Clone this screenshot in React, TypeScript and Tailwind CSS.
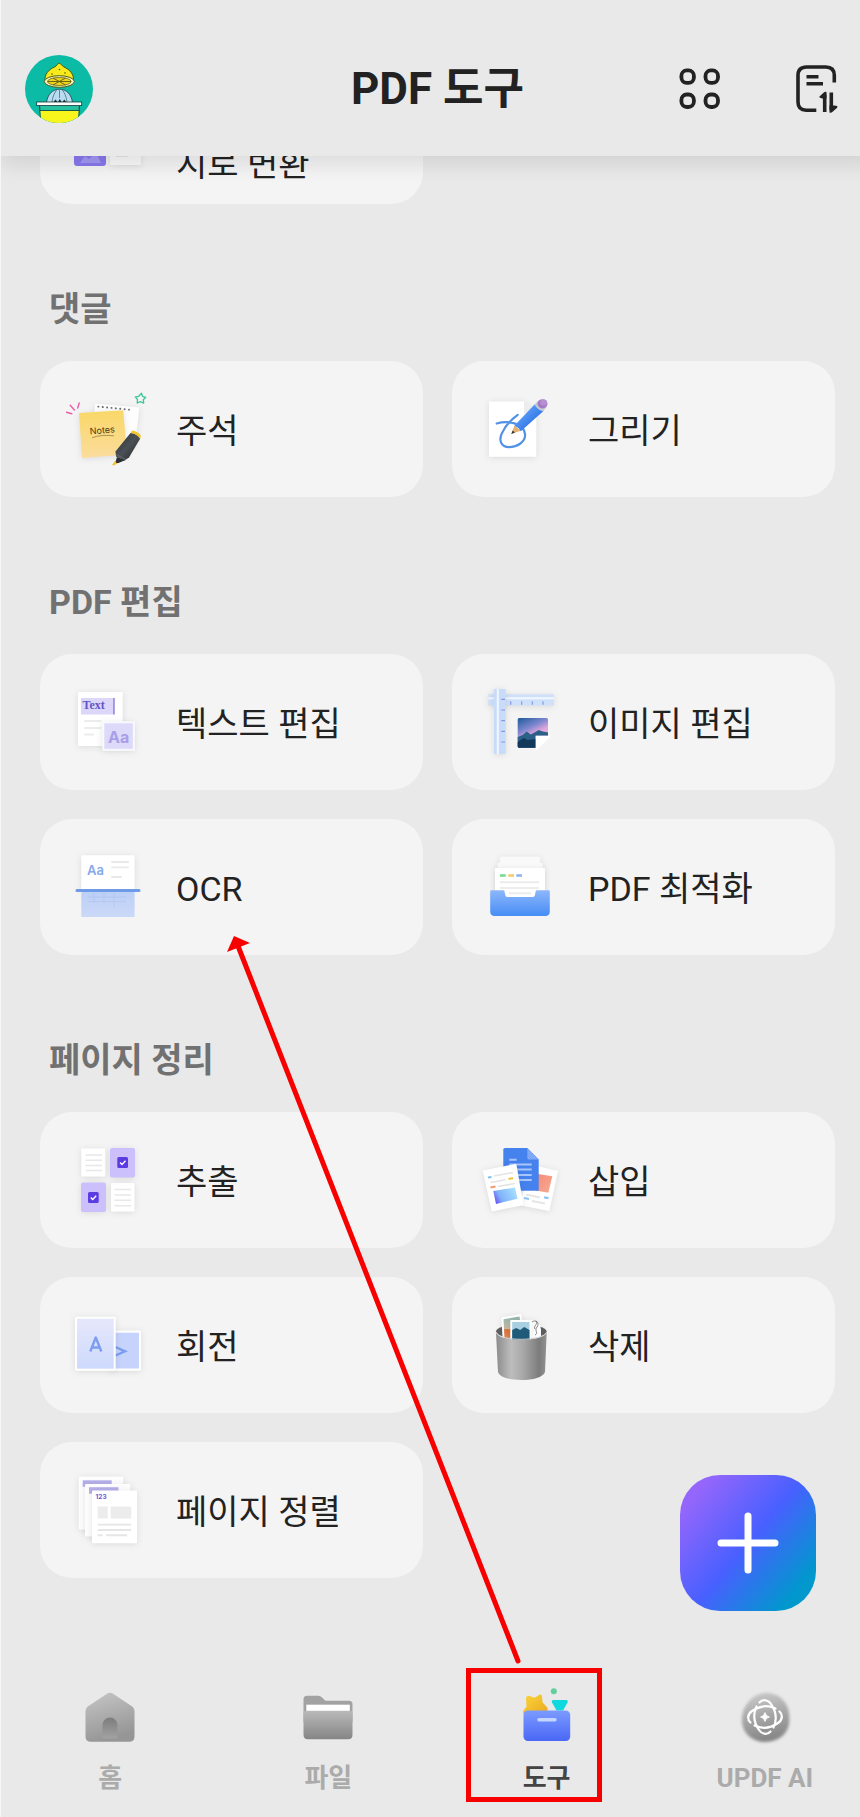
import type { ReactNode } from "react";

const SANS = "font-['Roboto','Noto_Sans_CJK_KR',sans-serif]";

function Art({ children }: { children: ReactNode }) {
  return (
    <svg viewBox="0 0 96 96" className="size-24 shrink-0 overflow-visible" aria-hidden="true">
      {children}
    </svg>
  );
}

const soft = "drop-shadow-[0_1px_3px_rgba(0,0,0,0.10)]";

function ConvertArt() {
  return (
    <Art>
      <rect x="14" y="40" width="32" height="38" rx="3" fill="#8878ee" />
      <path d="M20 75l5-7 4 3 7-6 5 10z" fill="#a397f4" />
      <g className={soft}>
        <rect x="50" y="40" width="31" height="37" rx="1" fill="#f9f9f9" />
      </g>
      <path d="M56 68h12" stroke="#e4e4e4" strokeWidth="2" />
    </Art>
  );
}

function NotesArt() {
  return (
    <Art>
      <defs>
        <linearGradient id="sticky" x1="0" y1="0" x2="0" y2="1">
          <stop offset="0" stopColor="#f9d868" />
          <stop offset="1" stopColor="#fbdc9c" />
        </linearGradient>
        <linearGradient id="marker" x1="0" y1="0" x2="1" y2="1">
          <stop offset="0" stopColor="#2b2f33" />
          <stop offset="0.5" stopColor="#4a5055" />
          <stop offset="1" stopColor="#202326" />
        </linearGradient>
      </defs>
      <path d="M6.5 31.3l5.3 1.4M10.2 24.2l4.2 4.8M19.2 22l-1.5 5" stroke="#e85fa8" strokeWidth="1.4" strokeLinecap="round" fill="none" />
      <path d="M81.500 12.200l1 3.200 3.200.9-2.400 2.400.4 3.400-3.300-1.400-3.200 1.300.3-3.500-2.200-2.600 3.400-.6z" stroke="#3cc79b" strokeWidth="1.3" fill="none" strokeLinejoin="round" />
      <g className={soft}>
        <path d="M35 22.5l44.3 4L75 66l-43-4z" fill="#fdfdfd" />
      </g>
      <path d="M38.3 25.6l32.5 3.2" stroke="#6a6d71" strokeWidth="1.900" strokeDasharray="0.1 4.3" strokeLinecap="round" />
      <g className={soft}>
        <path d="M19 32l44.3-2.7L67 73.5 22 77z" fill="url(#sticky)" />
      </g>
      <text x="30" y="53.5" fontSize="9" fill="#4d3b12" transform="rotate(-5 30 53)" className="font-['Inter',sans-serif]">Notes</text>
      <path d="M32 56.8c6-2.6 14-2.8 22-2" stroke="#8a733a" strokeWidth="0.7" fill="none" />
      <path d="M57 76l-2 6.5 3.5-.4 7-3z" fill="#2b2f33" />
      <path d="M54.8 80l-2.2 3.3.4 1.4 4.2-2z" fill="#f3c33a" />
      <path d="M70.5 52c4 .2 8 2.4 9.6 5.8L69 76.500l-4.500 3L56 75.500l-.5-5z" fill="url(#marker)" />
      <path d="M70.500 52l1.700-2.600c4.300.6 7.400 2.600 8.800 5.600l-.9 2.800c-2-3.200-5.600-5.400-9.600-5.800z" fill="#f1c62d" />
      <path d="M56 73.500l10 5" stroke="#7c8287" strokeWidth="0.6" />
    </Art>
  );
}

function DrawArt() {
  return (
    <Art>
      <defs>
        <linearGradient id="pencil" x1="0" y1="0" x2="1" y2="1">
          <stop offset="0.3" stopColor="#5a9cf8" />
          <stop offset="0.7" stopColor="#2f74e4" />
        </linearGradient>
      </defs>
      <g className={soft}>
        <path d="M17 20.500h35l12.300 12v43.200H17z" fill="#fff" />
      </g>
      <path d="M52 20.500v12h12.300z" fill="#ececec" />
      <path d="M24.700 42.500c11-3.200 27-.5 28.300 10.500 1 8-8 13-16 13.100-8 0-10.500-7-7-14 3.500-7.500 9-13.500 15.700-18.300" stroke="#5292e6" strokeWidth="2.200" fill="none" strokeLinecap="round" />
      <path d="M39.300 53l3.200-8.500 6.200 5.300z" fill="#e6b071" />
      <path d="M39.300 53l1.300-3.500 2.300 2z" fill="#333" />
      <path d="M42.400 44.800L62.500 23.500l9 6.500L48.800 50.300l-2.400-3.400z" fill="url(#pencil)" />
      <path d="M62.500 23.500l3.700-3.700c3.500.6 6.500 2.900 8.500 6.200l-3.600 4.300c-3.500-.8-6.700-3.300-8.600-6.800z" fill="#c3c8d4" />
      <ellipse cx="70.500" cy="22.800" rx="5" ry="4.600" fill="#a67bc6" />
      <ellipse cx="71.700" cy="21.500" rx="3.400" ry="3" fill="#b590d2" />
    </Art>
  );
}

function TextArt() {
  return (
    <Art>
      <g className={soft}>
        <rect x="18" y="18" width="44.700" height="54" rx="1" fill="#fff" />
      </g>
      <rect x="21" y="24" width="33" height="16.500" fill="#dcd7f8" />
      <text x="22.500" y="35" fontSize="12" fontWeight="600" fill="#6353c8" className="font-['Liberation_Serif',serif]">Text</text>
      <path d="M54 24v16.500" stroke="#8172d8" strokeWidth="1.300" />
      <path d="M24.300 47h17M24.300 54h17M24.300 60.500h9.500" stroke="#ececec" strokeWidth="2" />
      <g className={soft}>
        <rect x="42.300" y="47.300" width="32.500" height="29.500" fill="#f8f8ff" />
      </g>
      <rect x="44.300" y="49.300" width="28.500" height="25.500" fill="#dcdaf8" />
      <text x="48" y="68.500" fontSize="16" fontWeight="700" fill="#a99fe8" className="font-['Inter',sans-serif]">Aa</text>
    </Art>
  );
}

function OcrArt() {
  return (
    <Art>
      <defs>
        <linearGradient id="scan" x1="0" y1="0" x2="0" y2="1">
          <stop offset="0" stopColor="#bccff5" />
          <stop offset="1" stopColor="#cbd9f8" />
        </linearGradient>
      </defs>
      <g className={soft}>
        <rect x="21.300" y="16.300" width="53.300" height="35" rx="1" fill="#fff" />
      </g>
      <text x="27" y="35.500" fontSize="13" fontWeight="600" fill="#83aaec" className="font-['Inter',sans-serif]">Aa</text>
      <path d="M51.300 23h17.500M51.300 28.300h17.500M51.300 38h10.500" stroke="#e9e9e9" strokeWidth="1.800" />
      <rect x="21.300" y="53" width="53.300" height="25" rx="1" fill="url(#scan)" />
      <path d="M28 58h38M28 62.500h38M34 54v10M44 54v10M54 54v14" stroke="#b0c4f0" strokeWidth="0.700" />
      <path d="M17 51.500h62" stroke="#6f9ae8" strokeWidth="3" strokeLinecap="round" />
    </Art>
  );
}

function ImageArt() {
  return (
    <Art>
      <defs>
        <linearGradient id="sky" x1="0" y1="0" x2="0.500" y2="1">
          <stop offset="0" stopColor="#1b5a9a" />
          <stop offset="0.400" stopColor="#7d86cf" />
          <stop offset="0.650" stopColor="#e3a7dc" />
        </linearGradient>
      </defs>
      <g className={soft}>
        <rect x="16.300" y="20.300" width="65.700" height="11.200" fill="#cfe0fa" />
      </g>
      <path d="M16.300 24.300H82" stroke="#f2f7ff" strokeWidth="2" />
      <path d="M38.700 27.300v3.500M49.700 27.300v3.500M60.300 27.300v3.500M71 27.300v3.500" stroke="#7f97dc" strokeWidth="1.100" />
      <g className={soft}>
        <rect x="22" y="15" width="11.700" height="65" fill="#c8dcfa" />
      </g>
      <path d="M25.800 15v65" stroke="#f2f7ff" strokeWidth="2" />
      <path d="M29.300 25.300h3.700M29.300 36h3.700M29.300 46.700h3.700M29.300 57.300h3.700M29.300 68h3.700" stroke="#8a93de" strokeWidth="1.200" />
      <path d="M47.200 44h27.300q1.500 0 1.500 1.500v16.200H63.700v12H47.200q-1.500 0-1.500-1.500V45.500q0-1.500 1.500-1.500z" fill="url(#sky)" />
      <path d="M45.700 63l5-2 4-3.500 4 3 3-1.500 5-3 4 1.500 5.300 1v3.200H63.700v12H47.200q-1.500 0-1.500-1.500z" fill="#2b6088" />
      <path d="M45.700 68l6-4 4 2 8-1v8.700H47.200q-1.500 0-1.500-1.500z" fill="#12395a" />
      <path d="M63.700 61.700h15.500L65 76q-1.300 0-1.300-1.600z" fill="#fff" />
    </Art>
  );
}

function OptimizeArt() {
  return (
    <Art>
      <defs>
        <linearGradient id="tray" x1="0" y1="0" x2="0" y2="1">
          <stop offset="0" stopColor="#8db7fb" />
          <stop offset="1" stopColor="#468df5" />
        </linearGradient>
      </defs>
      <g className={soft}>
        <rect x="28" y="17.700" width="40" height="30" rx="1.500" fill="#f9f9f9" />
        <rect x="25.500" y="23.500" width="45.200" height="30" rx="1.500" fill="#fafafa" />
      </g>
      <g className={soft}>
        <rect x="23" y="29" width="50" height="30" rx="1" fill="#fff" />
      </g>
      <path d="M28 36.500h5.700" stroke="#74dc92" strokeWidth="2.600" />
      <path d="M36.300 36.500H42" stroke="#f0cd66" strokeWidth="2.600" />
      <path d="M44.300 36.500H50" stroke="#8db4ee" strokeWidth="2.600" />
      <path d="M28 43.300h39M28 49h39M37 54.200h22" stroke="#ececec" strokeWidth="2" />
      <path d="M19.500 51.300h11.800q1 0 1.200 1l.8 4q.3 1.700 2 1.700h25.600q1.700 0 2-1.700l.8-4q.2-1 1.200-1h11.600q1.300 0 1.300 1.300v20q0 4.400-4.400 4.400H22.600q-4.400 0-4.400-4.400v-20q0-1.300 1.300-1.300z" fill="url(#tray)" />
    </Art>
  );
}

function ExtractArt() {
  return (
    <Art>
      <g className={soft}>
        <rect x="21.300" y="16.500" width="24" height="28" rx="1" fill="#fff" />
        <rect x="51" y="51" width="23.500" height="28.500" rx="1" fill="#fff" />
      </g>
      <path d="M25.500 23h16.500M25.500 28.200h16.500M25.500 33.400h16.500M25.500 38.600h16.500M54.500 57.500h16.500M54.500 62.900h16.500M54.500 68.300h16.500M54.500 73.700h16.500" stroke="#e8e8e8" strokeWidth="1.500" />
      <g className={soft}>
        <rect x="50" y="16" width="25" height="29.500" rx="2" fill="#cbc0fb" />
        <rect x="21" y="50.500" width="25" height="29.500" rx="2" fill="#cbc0fb" />
      </g>
      <rect x="57.300" y="25" width="10.700" height="11" rx="1.500" fill="#5a3ce0" />
      <rect x="28" y="60" width="10.700" height="11" rx="1.500" fill="#5a3ce0" />
      <path d="M60 30.500l2 2 3.500-3.800M30.700 65.500l2 2 3.500-3.800" stroke="#fff" strokeWidth="1.300" fill="none" />
    </Art>
  );
}

function InsertArt() {
  return (
    <Art>
      <defs>
        <linearGradient id="blob" x1="0" y1="0.700" x2="1" y2="0.300">
          <stop offset="0" stopColor="#6a4ff0" />
          <stop offset="0.300" stopColor="#7fb2fa" />
          <stop offset="1" stopColor="#a9e0ff" />
        </linearGradient>
        <linearGradient id="coral" x1="0" y1="0" x2="1" y2="1">
          <stop offset="0" stopColor="#f58a78" />
          <stop offset="1" stopColor="#f7ab92" />
        </linearGradient>
      </defs>
      <g className={soft}>
        <path d="M60 33l26 6-8.700 40L47 73z" fill="#fff" />
      </g>
      <path d="M66 42l14.300 2.300-4 16.500L64 58.500z" fill="url(#coral)" />
      <path d="M54 62.500l14 3M60 69l13 2.500" stroke="#e6e6e6" strokeWidth="2" />
      <path d="M72 65.300l4.500.8M52 66l5 1" stroke="#8cc6f5" strokeWidth="2.200" />
      <path d="M33 16h22.300l11.400 11.500V58.700H31.300V17.500Q31.300 16 33 16z" fill="#4582ee" />
      <path d="M55.300 16l11.400 11.500H57q-1.700 0-1.700-1.500z" fill="#7fa9f6" />
      <path d="M37.300 27.700h7.400M37.300 32.500h22.400M37.300 37.500h22.400M37.300 43h22.400M37.300 48h22.400" stroke="#a8c6fb" strokeWidth="2" />
      <g className={soft}>
        <path d="M12 38.300l31.300-6.200q1-.2 1.200.8L51.300 72q.2 1-.8 1.200L21 79.200q-1.200.2-1.500-.9L11 39.700q-.2-1.200 1-1.400z" fill="#fff" />
      </g>
      <path d="M22 44l19-3.500M18.500 50.500l15-2.800M26 54.500l17-3" stroke="#e4e4e4" strokeWidth="1.600" />
      <path d="M16 45.500l3.500-.6" stroke="#7cc4ee" strokeWidth="2" />
      <path d="M36.500 47l4.500-.9" stroke="#f3c33a" strokeWidth="2.200" />
      <path d="M18.500 55.500l5-1" stroke="#f09a72" strokeWidth="2" />
      <path d="M21.300 59l21.700-3.500 2.500 11.300L24 72z" fill="url(#blob)" />
    </Art>
  );
}

function RotateArt() {
  return (
    <Art>
      <defs>
        <linearGradient id="leaf" x1="0" y1="0" x2="0" y2="1">
          <stop offset="0" stopColor="#e6e7fb" />
          <stop offset="1" stopColor="#cddafc" />
        </linearGradient>
      </defs>
      <g className={soft}>
        <rect x="50" y="33.500" width="31" height="40.200" rx="1.500" fill="#fff" />
      </g>
      <rect x="52" y="35.700" width="27" height="35.800" fill="#c6d3fc" />
      <path d="M55.500 50l9.500 4.300-9.500 4.200" stroke="#7c9df0" strokeWidth="2.400" fill="none" />
      <g className={soft}>
        <rect x="15" y="19.700" width="40.700" height="54" rx="1.500" fill="#fff" />
      </g>
      <rect x="17" y="21.700" width="36.700" height="50" fill="url(#leaf)" />
      <path d="M30.300 54.500l5.500-14 5.500 14M32.300 50.500h7" stroke="#7c9df0" strokeWidth="2.400" fill="none" strokeLinejoin="round" />
    </Art>
  );
}

function DeleteArt() {
  return (
    <Art>
      <defs>
        <linearGradient id="bin" x1="0" y1="0" x2="1" y2="0">
          <stop offset="0" stopColor="#8b8b8b" />
          <stop offset="0.300" stopColor="#bdbdbd" />
          <stop offset="0.550" stopColor="#a6a6a6" />
          <stop offset="0.850" stopColor="#7c7c7c" />
          <stop offset="1" stopColor="#929292" />
        </linearGradient>
        <linearGradient id="photo" x1="0" y1="0" x2="0" y2="1">
          <stop offset="0" stopColor="#8fb7b1" />
          <stop offset="0.550" stopColor="#c6b9a2" />
          <stop offset="0.600" stopColor="#d8733b" />
          <stop offset="1" stopColor="#e0874e" />
        </linearGradient>
      </defs>
      <ellipse cx="49.300" cy="34.500" rx="25.300" ry="7" fill="#606060" />
      <g className={soft}>
        <path d="M29.500 20.500L49 17l5 24H30.500z" fill="#fff" />
        <path d="M31.500 22.300l16-2.800 4 22H32.500z" fill="url(#photo)" />
        <path d="M58 22.500q10 1 11 10V41H58z" fill="#fff" />
      </g>
      <path d="M60 25c4-3 8 1 5 5s2 6-2 8M64 24c2 4-3 5-1 8" stroke="#555" strokeWidth="0.700" fill="none" />
      <g className={soft}>
        <rect x="38.300" y="23" width="21" height="20" rx="1" fill="#fff" />
      </g>
      <rect x="40.200" y="25" width="17.300" height="18" fill="#a9cfe2" />
      <path d="M40.200 33l4-2 4 2 4-3 5.300 3v10H40.200z" fill="#1f5a78" />
      <path d="M24 35.500c2 5 13 7.300 25.300 7.300s23.300-2.300 25.400-7.300L73 75c-2 5.500-12 8-23.500 8S28 80.500 26 75z" fill="url(#bin)" />
      <path d="M24 35c2 5 13 7.300 25.300 7.300S72.600 40 74.700 35" stroke="#d0d0d0" strokeWidth="1" fill="none" />
    </Art>
  );
}

function SortArt() {
  return (
    <Art>
      <g className={soft}>
        <rect x="18.700" y="14.500" width="44.600" height="53" rx="1" fill="#fdfdfd" />
      </g>
      <rect x="22.700" y="18.300" width="29" height="6.500" fill="#b6b0ea" />
      <g className={soft}>
        <rect x="25" y="21.900" width="45.300" height="52.500" rx="1" fill="#fdfdfd" />
      </g>
      <rect x="29" y="25.200" width="29.500" height="6.500" fill="#b6b0ea" />
      <g className={soft}>
        <rect x="32" y="28.500" width="45" height="52.800" rx="1" fill="#fff" />
      </g>
      <text x="35.500" y="37" fontSize="6.500" fontWeight="700" fill="#6c55d4" className="font-['Inter',sans-serif]">123</text>
      <rect x="37.700" y="44.500" width="10" height="12" fill="#ececec" />
      <rect x="50.700" y="44.500" width="20.500" height="12" fill="#ececec" />
      <path d="M37.700 62.600h33.500M37.700 68h33.500M37.700 73.300h5M46 73.300h21" stroke="#e6e6e6" strokeWidth="1.900" />
    </Art>
  );
}

function Avatar() {
  return (
    <svg viewBox="0 0 68 68" className="size-[68px]" aria-hidden="true">
      <defs>
        <clipPath id="round">
          <circle cx="34" cy="34" r="34" />
        </clipPath>
      </defs>
      <g clipPath="url(#round)">
        <rect width="68" height="68" fill="#0bbba5" />
        <path d="M34.300 8.300c1.800 0 2.400 2.600 4.500 3.600C45 14.500 49 19.500 48.500 25.500H20c-.5-6 3.500-11 9.700-13.600 2.300-1 2.800-3.600 4.600-3.600z" fill="#f9ea1c" stroke="#4e5a12" strokeWidth="1" />
        <circle cx="27" cy="19" r=".8" fill="#4e5a12" />
        <circle cx="34.500" cy="14.500" r=".8" fill="#4e5a12" />
        <circle cx="40" cy="18" r=".8" fill="#4e5a12" />
        <ellipse cx="34.300" cy="26.500" rx="15" ry="5.800" fill="#fbf6c0" stroke="#4e5a12" strokeWidth="1" />
        <ellipse cx="34.300" cy="26.500" rx="11.800" ry="4" fill="#efd51d" stroke="#6b6414" strokeWidth=".8" />
        <path d="M22.500 26.500h23.600M28 23l12.600 7M40.600 23L28 30" stroke="#5d5812" strokeWidth=".9" />
        <path d="M21.500 47.500c1-8 6-13.300 13-13.300s12 5.300 13 13.300z" fill="#b9dcf0" stroke="#28505c" strokeWidth=".9" />
        <path d="M27 47c.5-5 2.500-9.500 5-12.500M42 47c-.5-5-2.500-9.500-5-12.500M34.500 35v8" stroke="#4d7f92" strokeWidth=".9" fill="none" />
        <path d="M28.500 47l2-2.500 2 2.500zM33 47l1.800-3 1.800 3zM37.500 47l1.800-2.500 1.800 2.500z" fill="#1c2c30" />
        <path d="M14.500 50h40l-1.300 20H16z" fill="#27c0a0" stroke="#123c38" strokeWidth="1" />
        <path d="M15.500 56h38l-.8 14H16.300z" fill="#f7f51c" />
        <path d="M15 55.500h39" stroke="#123c38" strokeWidth=".8" />
        <rect x="11.700" y="47" width="45" height="3.600" fill="#fff" stroke="#123c38" strokeWidth=".8" />
      </g>
    </svg>
  );
}

function GridIcon() {
  return (
    <svg viewBox="0 0 42 42" className="size-[42px]" fill="none" stroke="#222" strokeWidth="3.800" aria-hidden="true">
      <rect x="2.400" y="2.400" width="12.500" height="12.500" rx="5.400" />
      <rect x="26.500" y="2.400" width="12.500" height="12.500" rx="5.400" />
      <rect x="2.400" y="26.500" width="12.500" height="12.500" rx="5.400" />
      <rect x="26.500" y="26.500" width="12.500" height="12.500" rx="5.400" />
    </svg>
  );
}

function SortPageIcon() {
  return (
    <svg viewBox="0 0 42 48" className="h-12 w-[42px]" fill="none" stroke="#222" strokeWidth="3.600" aria-hidden="true">
      <path d="M20.300 45.300h-10Q2 45 2 37V10.500Q2 2 10.500 2h19.300Q38.300 2 38.300 10.500v7" />
      <path d="M10.500 11.700h12M10.500 18.800H27" />
      <path d="M28.700 47V29.500M35.300 27.500V45" strokeWidth="3.600" />
      <path d="M30.500 27v6.500h-4.300l-2.700-1q-.4-.8.500-1.600l3.800-3.400q1.400-1 2.700-.5zM33.500 47.500v-7h5l2.600.5q.8.900-.2 1.900l-4.300 3.900q-1.600 1.300-3.100.7z" fill="#222" stroke="none" />
    </svg>
  );
}

function HomeIcon() {
  return (
    <svg viewBox="0 0 60 60" className="size-[60px]" aria-hidden="true">
      <defs>
        <linearGradient id="house" x1="0" y1="0" x2="0.300" y2="1">
          <stop offset="0" stopColor="#c6c6c6" />
          <stop offset="1" stopColor="#969696" />
        </linearGradient>
        <linearGradient id="door" x1="0" y1="0" x2="0" y2="1">
          <stop offset="0" stopColor="#7c7c7c" />
          <stop offset="1" stopColor="#a2a2a2" />
        </linearGradient>
      </defs>
      <path d="M27 6.700q3-1.800 6 0L51.500 19q3 2 3 5.500v24.700q0 5.500-5.500 5.500H11q-5.500 0-5.500-5.500V24.500q0-3.500 3-5.500z" fill="url(#house)" />
      <path d="M22.500 51.500V38a7.500 7.500 0 0 1 15 0v13.500z" fill="url(#door)" />
    </svg>
  );
}

function FolderIcon() {
  return (
    <svg viewBox="0 0 60 60" className="size-[60px]" aria-hidden="true">
      <defs>
        <linearGradient id="folder" x1="0" y1="0" x2="0" y2="1">
          <stop offset="0" stopColor="#bababa" />
          <stop offset="1" stopColor="#858585" />
        </linearGradient>
      </defs>
      <path d="M9 8.700h11.500q2 0 3.300 1.500l3.500 3.500H51q3.500 0 3.500 3.500V35h-49V12.200Q5.500 8.700 9 8.700z" fill="#a2a2a2" />
      <rect x="8.300" y="17.700" width="43.500" height="10" fill="#fff" />
      <path d="M8 23.700h44q2.500 0 2.500 2.500v21.500q0 4.500-4.500 4.500H10q-4.500 0-4.500-4.500V26.200q0-2.500 2.500-2.500z" fill="url(#folder)" />
    </svg>
  );
}

function ToolsIcon() {
  return (
    <svg viewBox="0 0 60 60" className="size-[60px] overflow-visible" aria-hidden="true">
      <defs>
        <linearGradient id="box" x1="0" y1="0" x2="0" y2="1">
          <stop offset="0" stopColor="#7c9bff" />
          <stop offset="1" stopColor="#4a67f5" />
        </linearGradient>
        <linearGradient id="star" x1="0" y1="0" x2="1" y2="1">
          <stop offset="0" stopColor="#fbd43c" />
          <stop offset="1" stopColor="#eaa91f" />
        </linearGradient>
      </defs>
      <path d="M10.500 9q1.600-.8 3 .3l4 1.500 5-3q2.300-.8 2.500 1.500l.5 6 4.500 5q1.200 1.500.5 3l-1 4H8q-3-.5-1.700-3.500l3.200-4-.5-8q-.1-2.200 1.500-2.800z" fill="url(#star)" />
      <circle cx="36.800" cy="4.300" r="3" fill="#5fd09a" />
      <path d="M36.500 13H49q2.500 0 1.500 2.500l-4.500 8h-6.500l-4.500-8Q34 13 36.500 13z" fill="#0fd9de" />
      <rect x="6.500" y="23.500" width="46.700" height="30.500" rx="4.500" fill="url(#box)" />
      <rect x="20.200" y="31" width="19.500" height="3.600" rx="1.800" fill="#c2d6ff" />
    </svg>
  );
}

const ARM_TURNS = [0, 90, 180, 270];

function AiIcon() {
  return (
    <svg viewBox="0 0 60 60" className="size-[60px] overflow-visible" aria-hidden="true">
      <defs>
        <linearGradient id="orb" x1="0.300" y1="0" x2="0.500" y2="1">
          <stop offset="0" stopColor="#c8c8c8" />
          <stop offset="1" stopColor="#848484" />
        </linearGradient>
        <filter id="haze" x="-20%" y="-20%" width="140%" height="140%">
          <feGaussianBlur stdDeviation="1.800" />
        </filter>
      </defs>
      <path d="M30 6c12-1 23 8 24 20 .5 6 1 11-2 17-4 8-13 12-22 12-12 0-22-8-23-20C6 21 16 7 30 6z" fill="url(#orb)" filter="url(#haze)" />
      <g fill="none" stroke="#fff" strokeWidth="2.200" strokeLinecap="round">
        {ARM_TURNS.map((turn) => (
          <path key={turn} d="M24.500 15.500C27.500 12 33 12.500 36 17c4.500 6.500 6.500 15 2.500 23.500" transform={`rotate(${turn} 30 30)`} />
        ))}
      </g>
      <path d="M30 25.500q.8 3.700 4.500 4.500-3.700.8-4.500 4.500-.8-3.700-4.500-4.500 3.700-.8 4.500-4.500z" fill="#fff" stroke="#fff" strokeWidth="0.800" />
    </svg>
  );
}

type Tool = { label: string; art: ReactNode };

const SECTIONS: { title: string; tools: Tool[] }[] = [
  {
    title: "댓글",
    tools: [
      { label: "주석", art: <NotesArt /> },
      { label: "그리기", art: <DrawArt /> },
    ],
  },
  {
    title: "PDF 편집",
    tools: [
      { label: "텍스트 편집", art: <TextArt /> },
      { label: "이미지 편집", art: <ImageArt /> },
      { label: "OCR", art: <OcrArt /> },
      { label: "PDF 최적화", art: <OptimizeArt /> },
    ],
  },
  {
    title: "페이지 정리",
    tools: [
      { label: "추출", art: <ExtractArt /> },
      { label: "삽입", art: <InsertArt /> },
      { label: "회전", art: <RotateArt /> },
      { label: "삭제", art: <DeleteArt /> },
      { label: "페이지 정렬", art: <SortArt /> },
    ],
  },
];

const TABS = [
  { label: "홈", icon: <HomeIcon />, active: false },
  { label: "파일", icon: <FolderIcon />, active: false },
  { label: "도구", icon: <ToolsIcon />, active: true },
  { label: "UPDF AI", icon: <AiIcon />, active: false },
];

function ToolCard({ label, art }: Tool) {
  return (
    <button type="button" className="flex h-[136px] items-center gap-5 rounded-[32px] bg-[#f4f4f4] px-5 text-left text-[34px] leading-[50px] text-[#222]">
      {art}
      <span className="pt-1">{label}</span>
    </button>
  );
}

export default function App() {
  return (
    <div className={`relative min-h-screen overflow-hidden border-l border-[#f6f6f6] bg-[#e9e9e9] ${SANS}`}>
      <div className="-mr-[14px] flex min-h-screen flex-col">
        <header className="relative z-10 grid h-[156px] grid-cols-[1fr_auto_1fr] items-center bg-[#e9e9e9] px-6 pt-[22px] shadow-[0_10px_18px_rgba(0,0,0,0.09)]">
          <button type="button" aria-label="프로필" className="justify-self-start rounded-full">
            <Avatar />
          </button>
          <h1 className="text-[44px] leading-[60px] font-bold text-[#222]">PDF 도구</h1>
          <div className="flex items-center gap-[75px] justify-self-end pr-3">
            <button type="button" aria-label="보기 방식">
              <GridIcon />
            </button>
            <button type="button" aria-label="정렬">
              <SortPageIcon />
            </button>
          </div>
        </header>

        <main className="flex-1 px-[39px]">
          <div className="-mt-[88px] grid grid-cols-2 gap-[29px]">
            <button type="button" className="flex h-[136px] items-center gap-5 rounded-[32px] bg-[#f4f4f4] px-5 text-left text-[34px] leading-[50px] text-[#222]">
              <ConvertArt />
              <span className="pt-14">지로 변환</span>
            </button>
          </div>
          {SECTIONS.map((section) => (
            <section key={section.title}>
              <h2 className="px-[9px] pt-20 pb-[27px] text-[34px] leading-[50px] font-bold text-[#717171]">{section.title}</h2>
              <div className="grid grid-cols-2 gap-[29px]">
                {section.tools.map((tool) => (
                  <ToolCard key={tool.label} label={tool.label} art={tool.art} />
                ))}
              </div>
            </section>
          ))}
        </main>

        <nav className="grid grid-cols-4 pb-[18px]">
          {TABS.map((tab) => (
            <a
              key={tab.label}
              href="#"
              aria-current={tab.active ? "page" : undefined}
              className={`flex flex-col items-center gap-[10px] text-[26px] leading-[42px] font-bold ${tab.active ? "text-[#444]" : "text-[#ababab]"}`}
            >
              {tab.icon}
              {tab.label}
            </a>
          ))}
        </nav>
      </div>

      <button
        type="button"
        aria-label="추가"
        className="absolute right-11 bottom-[206px] flex size-[136px] items-center justify-center rounded-[40px] bg-[linear-gradient(130deg,#9566fb_12%,#4860ff_50%,#0098cd_86%)]"
      >
        <svg viewBox="0 0 62 62" className="size-[62px]" stroke="#fff" strokeWidth="7" strokeLinecap="round" aria-hidden="true">
          <path d="M31 4v54M4 31h54" />
        </svg>
      </button>

      <div className="pointer-events-none absolute bottom-[15px] left-[465px] z-20 h-[134px] w-[136px] border-5 border-[#f80000]" />
      <svg viewBox="0 0 300 740" className="pointer-events-none absolute bottom-[149px] left-[224px] z-20 h-[740px] w-[300px]" aria-hidden="true">
        <path d="M293 733L13 18" stroke="#f80000" strokeWidth="5" strokeLinecap="round" />
        <path d="M9 8l16 7-23 9z" fill="#f80000" />
      </svg>
    </div>
  );
}
